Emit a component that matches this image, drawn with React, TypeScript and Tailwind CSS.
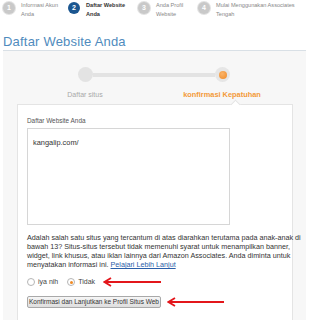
import React, { useState } from 'react';

const steps = [
    { n: 1, l1: 'Informasi Akun', l2: 'Anda', w: 'w-[65px]', active: false },
    { n: 2, l1: 'Daftar Website', l2: 'Anda', w: 'w-[70px]', active: true },
    { n: 3, l1: 'Anda Profil', l2: 'Website', w: 'w-[60px]', active: false },
    { n: 4, l1: 'Mulai Menggunakan Associates', l2: 'Tengah', w: 'w-[100px]', active: false },
];

const RedArrow = ({ width }: { width: number }) => (
    <svg width={width} height="10" viewBox={`0 0 ${width} 10`} className="block">
        <line x1="3" y1="5" x2={width} y2="5" stroke="#e3161b" strokeWidth="1.8" />
        <path d="M8 1 L1.5 5 L8 9" fill="none" stroke="#e3161b" strokeWidth="1.8" strokeLinejoin="miter" />
    </svg>
);

const App = () => {
    const [answer, setAnswer] = useState<'ya' | 'tidak'>('tidak');

    return (
        <div className="w-[309px] h-[320px] overflow-hidden bg-white font-['Liberation_Sans',Arial,sans-serif]">
            {/* Step wizard */}
            <div className="flex pl-[3px] pt-[1px] h-[22px]">
                {steps.map(s => (
                    <div key={s.n} className={`flex ${s.w} gap-[6px]`}>
                        <div
                            className={`mt-[1px] w-[12px] h-[12px] shrink-0 rounded-full flex items-center justify-center text-[7px] font-bold text-white ${
                                s.active ? 'bg-[#1b5690]' : 'bg-[#c9c9c9] ring-1 ring-[#e2e2e2]'
                            }`}
                        >
                            {s.n}
                        </div>
                        <div className={`text-[5.6px] leading-[9px] ${s.active ? 'font-bold text-[#333]' : 'text-[#888]'}`}>
                            <div className="whitespace-nowrap">{s.l1}</div>
                            <div>{s.l2}</div>
                        </div>
                    </div>
                ))}
            </div>

            {/* Heading */}
            <div className="mx-[3px] mt-[13px]">
                <h1 className="text-[13px] leading-[14px] text-[#4f8bbd] border-b border-[#d9e0e6] pb-[1px] tracking-[0.2px]">
                    Daftar Website Anda
                </h1>

                {/* Panel */}
                <div className="bg-[#f7f7f7] h-[270px] pt-[16px]">
                    {/* Progress */}
                    <div className="flex items-center ml-[75px]">
                        <div className="w-[15px] h-[15px] rounded-full bg-[#e3e3e3]" />
                        <div className="w-[122px] h-[4px] bg-[#e3e3e3]" />
                        <div className="w-[15px] h-[15px] rounded-full bg-[#e6e6e6] flex items-center justify-center">
                            <div className="w-[8px] h-[8px] rounded-full bg-[radial-gradient(circle_at_40%_35%,#fbb46a,#ef8a26)]" />
                        </div>
                    </div>
                    <div className="flex mt-[8px] text-[7px] leading-[9px]">
                        <div className="ml-[42px] w-[80px] text-center text-[#a9a9a9]">Daftar situs</div>
                        <div className="ml-[49px] w-[96px] text-center font-bold text-[#f39a3a] text-[7.4px]">konfirmasi Kepatuhan</div>
                    </div>

                    {/* Card */}
                    <div className="relative ml-[14px] mr-[13px] mt-[5px] bg-white border border-[#e4e4e4] h-[220px] px-[9px] pt-[12px]">
                        <div className="absolute -top-[4px] left-[214px] w-[7px] h-[7px] rotate-45 bg-white border-l border-t border-[#e4e4e4]" />
                        <div className="text-[6.4px] leading-[8px] text-[#555]">Daftar Website Anda</div>
                        <div className="mt-[3px] w-[203px] h-[97px] border border-[#d6d6d6] px-[5px] pt-[8px] text-[7.4px] text-[#333]">
                            kangalip.com/
                        </div>

                        <p className="mt-[8px] text-[7.2px] leading-[9px] text-[#333] whitespace-nowrap">
                            Adalah salah satu situs yang tercantum di atas diarahkan terutama pada anak-anak di
                            <br />
                            bawah 13? Situs-situs tersebut tidak memenuhi syarat untuk menampilkan banner,
                            <br />
                            widget, link khusus, atau iklan lainnya dari Amazon Associates. Anda diminta untuk
                            <br />
                            menyatakan informasi ini. <a className="text-[#2a5ea8] underline">Pelajari Lebih Lanjut</a>
                        </p>

                        {/* Radios */}
                        <div className="flex items-center mt-[8px] h-[10px] text-[7px] text-[#444]">
                            <button onClick={() => setAnswer('ya')} className="flex items-center gap-[3px]">
                                <span className="w-[8px] h-[8px] rounded-full border border-[#b5b5b5] bg-white flex items-center justify-center">
                                    {answer === 'ya' && <span className="w-[3px] h-[3px] rounded-full bg-[#f08a24]" />}
                                </span>
                                iya nih
                            </button>
                            <button onClick={() => setAnswer('tidak')} className="flex items-center gap-[3px] ml-[9px]">
                                <span className="w-[8px] h-[8px] rounded-full border border-[#b5b5b5] bg-white flex items-center justify-center">
                                    {answer === 'tidak' && <span className="w-[3px] h-[3px] rounded-full bg-[#f08a24]" />}
                                </span>
                                Tidak
                            </button>
                            <div className="ml-[8px]">
                                <RedArrow width={58} />
                            </div>
                        </div>

                        {/* Button */}
                        <div className="flex items-center mt-[9px]">
                            <button className="h-[12px] w-[134px] rounded-[2px] border border-[#a9a9a9] bg-gradient-to-b from-[#f6f6f6] to-[#dedede] text-[6.5px] leading-[10px] text-[#333] whitespace-nowrap">
                                Konfirmasi dan Lanjutkan ke Profil Situs Web
                            </button>
                            <div className="ml-[6px]">
                                <RedArrow width={57} />
                            </div>
                        </div>
                    </div>
                </div>
            </div>
        </div>
    );
};

export default App;
